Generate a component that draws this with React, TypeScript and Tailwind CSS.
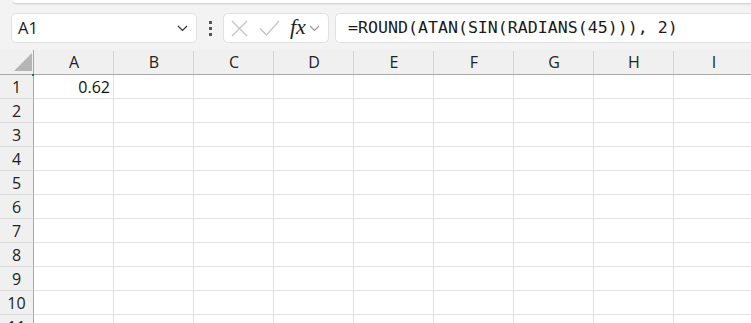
import React from "react";

const cols = ["A", "B", "C", "D", "E", "F", "G", "H", "I"];
const rows = [1, 2, 3, 4, 5, 6, 7, 8, 9, 10, 11];

export default function App() {
  return (
    <div
      className="w-[751px] h-[323px] overflow-hidden bg-[#f3f3f3] text-[#222]"
      style={{ fontFamily: '"Open Sans", "Noto Sans", sans-serif' }}
    >
      {/* ribbon bottom edge */}
      <div className="ml-[13px] h-[3px] bg-white rounded-bl-[6px] shadow-[0_1px_2px_rgba(0,0,0,0.18)]" />

      {/* formula toolbar */}
      <div className="h-[47px] flex items-start pt-[10px] pl-[11px]">
        {/* name box */}
        <div className="w-[186px] h-[30px] bg-white border border-[#e1e1e1] rounded-[5px] flex items-center pl-[6px] pr-[8px]">
          <span className="text-[16.5px] leading-none text-[#1a1a1a]">A1</span>
          <svg className="ml-auto" width="11" height="7" viewBox="0 0 11 7">
            <path d="M1 1l4.5 4.5L10 1" fill="none" stroke="#333" strokeWidth="1.2" />
          </svg>
        </div>
        {/* dots */}
        <div className="w-[26px] h-[30px] flex flex-col items-center justify-center gap-[3px]">
          <div className="w-[3px] h-[3px] bg-[#555]" />
          <div className="w-[3px] h-[3px] bg-[#555]" />
          <div className="w-[3px] h-[3px] bg-[#555]" />
        </div>
        {/* buttons */}
        <div className="w-[106px] h-[30px] bg-white border border-[#e1e1e1] rounded-[5px] flex items-center pl-[7px]">
          <svg width="17" height="17" viewBox="0 0 17 17">
            <path d="M1 1l15 15M16 1L1 16" stroke="#c4c4c4" strokeWidth="1.3" fill="none" />
          </svg>
          <svg className="ml-[11px]" width="21" height="16" viewBox="0 0 21 16">
            <path d="M1 8.5l6.5 6.5L20 1" stroke="#c4c4c4" strokeWidth="1.3" fill="none" />
          </svg>
          <span
            className="ml-[10px] text-[22px] leading-none italic text-[#222] -mt-[3px]"
            style={{ fontFamily: '"Liberation Serif", "DejaVu Serif", serif' }}
          >
            fx
          </span>
          <svg className="ml-[3px]" width="11" height="7" viewBox="0 0 11 7">
            <path d="M1 1l4.5 4.5L10 1" fill="none" stroke="#9a9a9a" strokeWidth="1.1" />
          </svg>
        </div>
        {/* formula input */}
        <div className="ml-[6px] flex-1 h-[30px] bg-white border border-[#e1e1e1] border-r-0 rounded-l-[5px] flex items-center pl-[12px]">
          <span
            className="text-[16.6px] leading-none text-[#1a1a1a] whitespace-pre"
            style={{ fontFamily: '"DejaVu Sans Mono", "Liberation Mono", monospace' }}
          >
            =ROUND(ATAN(SIN(RADIANS(45))), 2)
          </span>
        </div>
      </div>

      {/* grid */}
      <div className="grid grid-cols-[34px_repeat(9,80px)] bg-white">
        {/* corner */}
        <div className="h-[25px] bg-[#f0f0f0] border-r border-b border-[#a8a8a8] relative">
          <svg className="absolute left-[14px] top-[3px]" width="18" height="18" viewBox="0 0 18 18">
            <path d="M18 0V18H0Z" fill="#b5b5b5" />
          </svg>
          <div className="absolute right-[-1px] bottom-[-2px] w-[2px] h-[2px] bg-[#217346]" />
        </div>
        {cols.map((c) => (
          <div
            key={c}
            className="h-[25px] bg-[#f0f0f0] border-b border-[#a8a8a8] flex items-center justify-center relative text-[16px] text-[#222]"
          >
            {c}
            <div className="absolute right-0 top-[1px] bottom-0 w-px bg-[#d4d4d4]" />
          </div>
        ))}
        {rows.map((r) => (
          <React.Fragment key={r}>
            <div className="h-[24px] bg-[#f0f0f0] border-r border-b border-r-[#a8a8a8] border-b-[#d9d9d9] flex items-center justify-center text-[16px] text-[#222]">
              {r}
            </div>
            {cols.map((c) => (
              <div
                key={c}
                className="h-[24px] border-r border-b border-[#e1e1e1] flex items-center justify-end pr-[3px] text-[16px] text-[#111]"
              >
                {r === 1 && c === "A" ? "0.62" : ""}
              </div>
            ))}
          </React.Fragment>
        ))}
      </div>
    </div>
  );
}
